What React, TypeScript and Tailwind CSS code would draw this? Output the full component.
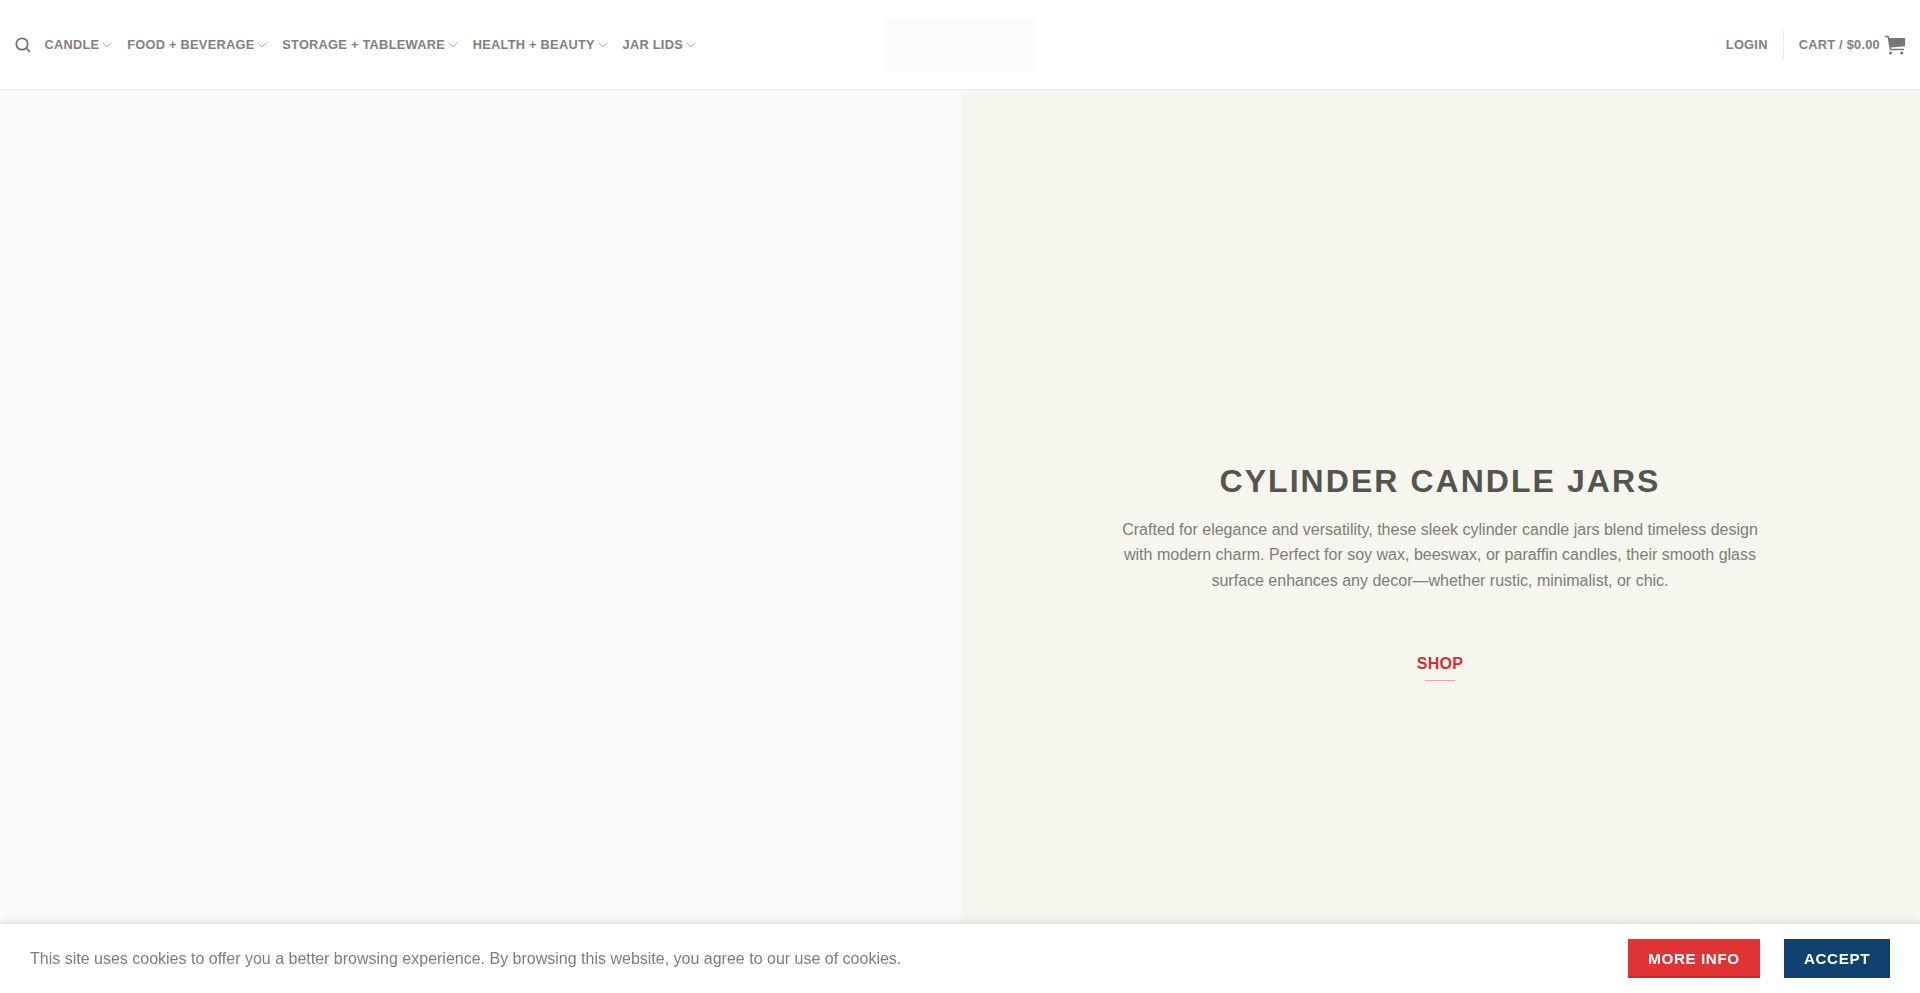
import React from 'react';

const navItems = ['CANDLE', 'FOOD + BEVERAGE', 'STORAGE + TABLEWARE', 'HEALTH + BEAUTY', 'JAR LIDS'];

const Chevron: React.FC = () => (
  <svg width="10" height="6" viewBox="0 0 10 6" fill="none" stroke="#a8a8a8" strokeWidth="0.9" className="ml-[3px] mt-[1px]">
    <path d="M0.5 0.5L5 5L9.5 0.5" />
  </svg>
);

const App: React.FC = () => {
  return (
    <div className="relative h-screen overflow-hidden bg-white font-['Liberation_Sans',Arial,sans-serif]">
      <header className="flex h-[90px] items-center justify-between border-b border-[#ececec] px-[15px]">
        <nav className="flex flex-1 items-center">
          <svg width="16" height="16" viewBox="0 0 16 16" fill="none" stroke="#6f6f6f" strokeWidth="1.7" className="mr-[13.5px]">
            <circle cx="7" cy="7" r="5.7" />
            <path d="M11.2 11.2L15 15" />
          </svg>
          <ul className="flex items-center gap-[14.8px]">
            {navItems.map((item) => (
              <li key={item} className="flex items-center text-[12.8px] font-bold tracking-[0.26px] text-[#808080]">
                {item}
                <Chevron />
              </li>
            ))}
          </ul>
        </nav>
        <div className="h-[52px] w-[150px] rounded-sm bg-[#fbfbfb]" />
        <div className="flex flex-1 items-center justify-end text-[12.8px] font-bold tracking-[0.26px] text-[#808080]">
          <span>LOGIN</span>
          <div className="mx-[15px] h-[30px] w-px bg-[#ececec]" />
          <span>CART / $0.00</span>
          <svg width="20" height="20" viewBox="0 0 20 20" fill="#777777" className="ml-[5px]">
            <path d="M0 0.8h3.6l0.7 2.2H20v8.2l-14.4 1.2 0.4 1.4H19v1.4H4.8L2.6 2.2H0z" />
            <circle cx="5.6" cy="18" r="1.6" />
            <circle cx="16.8" cy="18" r="1.6" />
          </svg>
        </div>
      </header>

      <main className="flex h-[903px]">
        <section className="w-1/2 bg-[#fafafa]" />
        <section className="flex w-1/2 flex-col items-center bg-[linear-gradient(90deg,#f8f8f4,#f6f5ee_4px)] pt-[369px] text-center">
          <h1 className="text-[32px] font-bold leading-[44px] tracking-[2.05px] text-[#555550]">CYLINDER CANDLE JARS</h1>
          <p className="mt-[13.6px] w-[650px] text-[16px] leading-[25.6px] text-[#7d7d79]">
            Crafted for elegance and versatility, these sleek cylinder candle jars blend timeless design with modern charm. Perfect for soy wax, beeswax, or paraffin candles, their smooth glass surface enhances any decor—whether rustic, minimalist, or chic.
          </p>
          <a className="mt-[59px] text-[16px] font-bold tracking-[0.32px] text-[#cf3232]">SHOP</a>
          <div className="mt-[4px] h-px w-[30px] bg-[#e9a5a0]" />
        </section>
      </main>

      <div className="fixed inset-x-0 bottom-0 flex h-[69px] items-center justify-between bg-white px-[30px] shadow-[0_-1px_8px_rgba(0,0,0,0.14)]">
        <p className="text-[16px] text-[#7d7d7d]">
          This site uses cookies to offer you a better browsing experience. By browsing this website, you agree to our use of cookies.
        </p>
        <div className="flex items-center gap-[24px]">
          <button className="h-[39px] w-[132px] border-b-2 border-[#c42c2c] bg-[#e03333] pt-[3px] text-[15.2px] font-bold tracking-[0.6px] text-white">MORE INFO</button>
          <button className="h-[39px] w-[106px] bg-[#11426f] pt-[1px] text-[15.2px] font-bold tracking-[0.6px] text-white">ACCEPT</button>
        </div>
      </div>
    </div>
  );
};

export default App;
